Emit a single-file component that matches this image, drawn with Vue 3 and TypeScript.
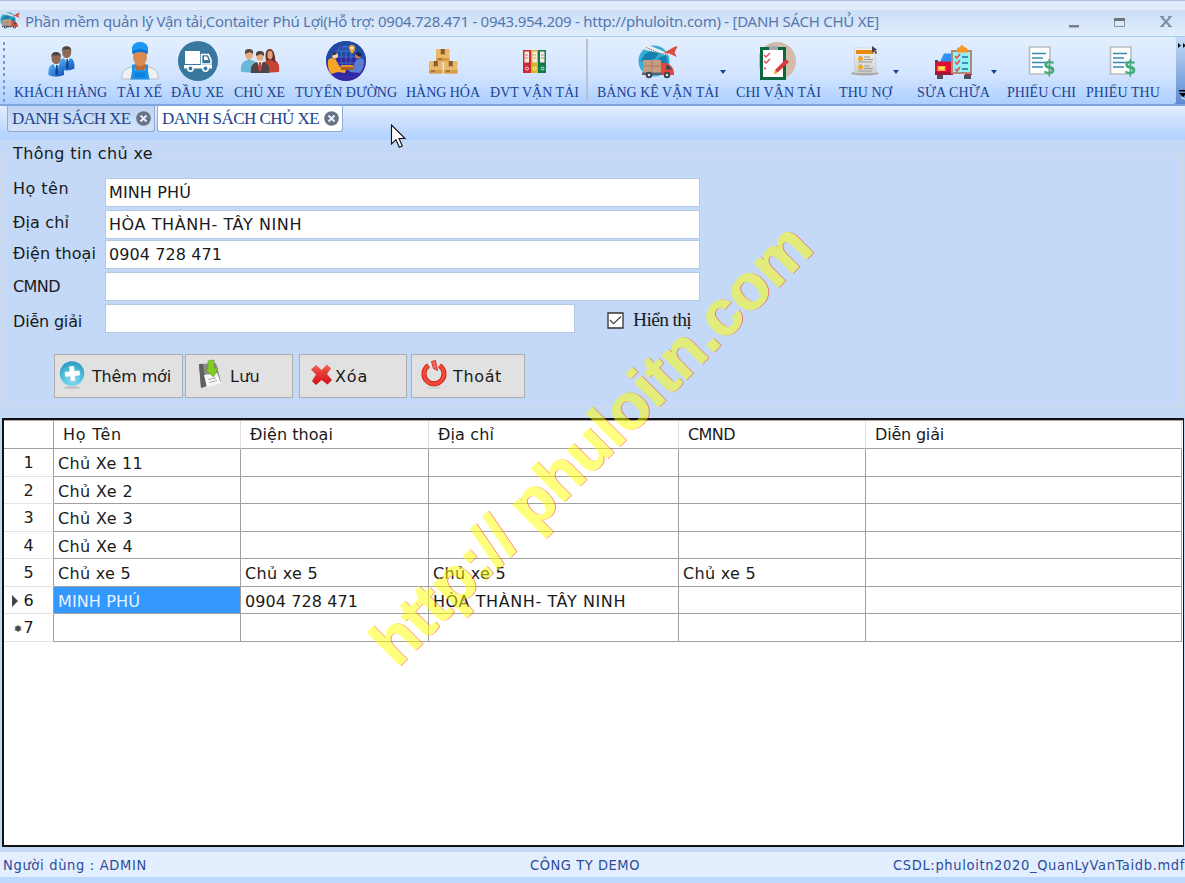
<script setup lang="ts">
import type { Directive } from 'vue'

interface Tool { label: string; icon: string; gap: number; width: number; menu?: boolean; divider?: boolean }
interface Field { label: string; labelWidth: number; value: string; valueWidth: number; cls: string }
interface Cell { text: string; width: number }

/** Spreads the letters of a label so that it fills the given width. */
function spread(el: HTMLElement, target: number) {
  if (!target) return
  el.style.letterSpacing = '0px'
  const natural = el.getBoundingClientRect().width
  const count = Array.from((el.textContent ?? '').trim()).length
  if (count) el.style.letterSpacing = `${(target - natural) / count}px`
}
const vFit: Directive<HTMLElement, number> = {
  mounted: (el, b) => spread(el, b.value),
}

const tools: Tool[] = [
  { label: 'KHÁCH HÀNG', icon: 'people', gap: 14, width: 93 },
  { label: 'TÀI XẾ', icon: 'driver', gap: 10, width: 45 },
  { label: 'ĐẦU XE', icon: 'truck', gap: 9, width: 53 },
  { label: 'CHỦ XE', icon: 'team', gap: 10, width: 51 },
  { label: 'TUYẾN ĐƯỜNG', icon: 'route', gap: 10, width: 102 },
  { label: 'HÀNG HÓA', icon: 'boxes', gap: 9, width: 74 },
  { label: 'ĐVT VẬN TẢI', icon: 'binders', gap: 10, width: 89 },
  { label: 'BẢNG KÊ VẬN TẢI', icon: 'freight', gap: 18, width: 122, menu: true, divider: true },
  { label: 'CHI VẬN TẢI', icon: 'clipboard', gap: 17, width: 85 },
  { label: 'THU NỢ', icon: 'debt', gap: 18, width: 53, menu: true },
  { label: 'SỬA CHỮA', icon: 'repair', gap: 25, width: 73, menu: true },
  { label: 'PHIẾU CHI', icon: 'receipt', gap: 17, width: 69 },
  { label: 'PHIẾU THU', icon: 'receipt', gap: 10, width: 74 },
]

const fields: Field[] = [
  { label: 'Họ tên', labelWidth: 56, value: 'MINH PHÚ', valueWidth: 82, cls: 'f1' },
  { label: 'Địa chỉ', labelWidth: 56, value: 'HÒA THÀNH- TÂY NINH', valueWidth: 193, cls: 'f2' },
  { label: 'Điện thoại', labelWidth: 83, value: '0904 728 471', valueWidth: 113, cls: 'f3' },
  { label: 'CMND', labelWidth: 47, value: '', valueWidth: 0, cls: 'f4' },
  { label: 'Diễn giải', labelWidth: 69, value: '', valueWidth: 0, cls: 'f5' },
]

const columns: Cell[] = [
  { text: 'Họ Tên', width: 59 },
  { text: 'Điện thoại', width: 83 },
  { text: 'Địa chỉ', width: 56 },
  { text: 'CMND', width: 47 },
  { text: 'Diễn giải', width: 69 },
]

const none: Cell = { text: '', width: 0 }
const xe5: Cell = { text: 'Chủ xe 5', width: 73 }
const rows: Cell[][] = [
  [{ text: 'Chủ Xe 11', width: 85 }, none, none, none, none],
  [{ text: 'Chủ Xe 2', width: 75 }, none, none, none, none],
  [{ text: 'Chủ Xe 3', width: 75 }, none, none, none, none],
  [{ text: 'Chủ Xe 4', width: 75 }, none, none, none, none],
  [xe5, xe5, xe5, xe5, none],
  [{ text: 'MINH PHÚ', width: 82 }, { text: '0904 728 471', width: 113 }, { text: 'HÒA THÀNH- TÂY NINH', width: 193 }, none, none],
  [none, none, none, none, none],
]
const current = 5
</script>

<template>
  <div class="window">
    <svg class="sprite" width="0" height="0" aria-hidden="true">
      <defs>
        <linearGradient id="gBlue" x1="0" y1="0" x2="1" y2="1"><stop offset="0" stop-color="#58b8f5" /><stop offset="1" stop-color="#0c4fc0" /></linearGradient>
        <radialGradient id="gCyan" cx=".5" cy=".75" r=".75"><stop offset="0" stop-color="#86e8fb" /><stop offset="1" stop-color="#2798bf" /></radialGradient>
        <linearGradient id="gRed" x1="0" y1="0" x2="0" y2="1"><stop offset="0" stop-color="#f5604c" /><stop offset="1" stop-color="#d00c18" /></linearGradient>
        <linearGradient id="gPaper" x1="0" y1="0" x2="0" y2="1"><stop offset="0" stop-color="#f4f3f0" /><stop offset="1" stop-color="#cfcfce" /></linearGradient>
        <g id="person">
          <path d="M-7.500 15V10.500Q-7 5 -2.500 4H3.500Q7.500 5 8 10.500V15Q0 18.500 -7.500 15z" fill="url(#gBlue)" />
          <path d="M-2.500 4L.5 10 3.500 4z" fill="#dff2ff" /><path d="M0 5h1.500l.8 8-1.500 3-1.500-3z" fill="#174584" />
          <ellipse cx=".2" cy="-1.500" rx="4.600" ry="5.800" fill="#8c6a55" />
          <path d="M-4.800-2.500Q-5-8 0-8t5 5L3-5Q-2-4-3-5z" fill="#4c4340" />
        </g>
        <g id="cube">
          <rect width="13.500" height="12.500" rx="1" fill="#e9b868" /><path d="M0 9h13.500v2.500q0 1-1 1H1q-1 0-1-1z" fill="#d89b4b" />
          <path d="M4.800 0h4v6l-2-1.200-2 1.200z" fill="#8a5930" /><path d="M2 9.500h4v1H2z" fill="#74512d" />
        </g>
      </defs>
      <symbol id="ic-people" viewBox="0 0 40 40">
        <use href="#person" transform="translate(25.500 13) scale(.98)" /><use href="#person" transform="translate(15 19)" />
      </symbol>
      <symbol id="ic-driver" viewBox="0 0 40 40">
        <path d="M2 38q-1-8 5-10.500l7-2.500h12l7 2.500q6 2.500 5 10.500z" fill="#eef0f3" stroke="#aeb3bb" stroke-width=".8" />
        <path d="M15 21h10v7q-5 5-10 0z" fill="#bd6b32" /><ellipse cx="20" cy="15.500" rx="7" ry="10" fill="#d98a50" />
        <path d="M10.500 38.500L12 30V23.500h3V29h10v-5.500h3V30l1.500 8.500z" fill="#1b93ee" /><path d="M15 31.500h10v5H15z" fill="#0f7fdc" />
        <path d="M12 12.500V6.500Q13.500 1 20 1t8 5.500v6q-8-4-16 0z" fill="#1c97f5" /><path d="M12.500 10q7.500-4 15 0v3q-7.500-4-15 0z" fill="#0b72cf" />
      </symbol>
      <symbol id="ic-truck" viewBox="0 0 40 40">
        <circle cx="20" cy="20" r="20" fill="#38789f" />
        <path d="M7 10h15v13H7z" fill="#fff" /><path d="M23.500 13.500h7l2.500 5.500v4h-9.500z" fill="none" stroke="#fff" stroke-width="1.600" /><path d="M26 15.500h3l1.500 3.500H26z" fill="#fff" />
        <path d="M6 24h28v3.500H6z" fill="#fff" />
        <g fill="#38789f" stroke="#fff" stroke-width="1.500"><circle cx="12.500" cy="27.500" r="2.700" /><circle cx="27.500" cy="27.500" r="2.700" /></g>
      </symbol>
      <symbol id="ic-team" viewBox="0 0 40 40">
        <path d="M1 31q-1-9 4-11l4-2 7 3v11z" fill="#68b8d6" /><path d="M39 31q1-9-3-11l-5-2-7 3v11z" fill="#c54434" />
        <path d="M26 20q-2-12 4-12 5 0 5.500 14l-4-3z" fill="#6b312b" /><ellipse cx="9" cy="13.500" rx="4" ry="5" fill="#e4ad7e" /><path d="M5 13q-1-5 4-5t4 5l-3-2z" fill="#594941" />
        <ellipse cx="30" cy="14" rx="2.600" ry="4.200" fill="#e3a279" />
        <path d="M11 32q-1-8 4-10l4-2h2l5 2q4 2 3 10z" fill="#4a4547" /><path d="M17 20h6l-3 9z" fill="#fff" /><path d="M19 21h2l1 7-2 3-2-3z" fill="#ca3f39" />
        <ellipse cx="20" cy="15.500" rx="3.500" ry="4.500" fill="#e5ad7d" /><path d="M16 15q-1-5 4-5t4 5l-3-2z" fill="#4d4140" />
      </symbol>
      <symbol id="ic-route" viewBox="0 0 40 40">
        <circle cx="20" cy="20" r="20" fill="#3027a3" /><path d="M0 20a20 20 0 0 1 40 0q-20-9-40 0z" fill="#204ba5" />
        <g fill="none" stroke="#548bc7" stroke-width=".6"><circle cx="20" cy="16" r="11" /><ellipse cx="20" cy="16" rx="5" ry="11" /><path d="M9 16h22M11 10h18M11 22h18M20 5v22" /><path d="M5 12Q20-3 34 12M7 33Q20 41 34 32" stroke="#4e37c0" /></g>
        <path d="M2 19q4-4 8 0l3 6 7 4-1 3-7-1-7 2q-4-6-3-14z" fill="#f7a526" /><path d="M38 19q-4-4-8 1l-3 6-5 2 2 3 10 1q5-6 4-13z" fill="#5a7fcf" />
        <circle cx="9" cy="14.500" r="3" fill="#ffd0a1" /><path d="M6 14.500q0-5 5-3l-1 2z" fill="#253354" /><circle cx="32" cy="14.500" r="3" fill="#c67b55" /><path d="M29 13q4-5 7 1l-2 2z" fill="#172752" />
        <path d="M15 24h12v5H15z" fill="#a76124" /><path d="M15 24h12v2H15z" fill="#e1912d" /><path d="M26 13q-3-5-3-6a3 3 0 0 1 6 0q0 2-3 6z" fill="#f8a72a" /><circle cx="26" cy="7" r="1.200" fill="#fff" />
      </symbol>
      <symbol id="ic-boxes" viewBox="0 0 40 40">
        <use href="#cube" x="13" y="8" /><use href="#cube" x="6" y="20" /><use href="#cube" x="21" y="20" />
      </symbol>
      <symbol id="ic-binders" viewBox="0 0 40 40">
        <path d="M8 9h8v23H8z" fill="#ce2935" /><path d="M16 9h7v23h-7z" fill="#d6b526" /><path d="M23 9h8v23h-8z" fill="#12794a" />
        <path d="M9.500 10.500h4.500v11H9.500zM17.500 10.500H22v11h-4.500zM25 10.500h4.500v11H25z" fill="#f6e9dd" />
        <path d="M10 14h3M10 17h3" stroke="#c67" stroke-width=".8" /><path d="M18 14h3M18 17h3" stroke="#cba63c" stroke-width=".8" /><path d="M26 14h3M26 17h3" stroke="#4c9c78" stroke-width=".8" />
        <g fill="none" stroke="#fff" stroke-width=".8"><circle cx="12" cy="27.500" r="1.500" /><circle cx="19.700" cy="27.500" r="1.500" /><circle cx="27.500" cy="27.500" r="1.500" /></g>
      </symbol>
      <symbol id="ic-freight" viewBox="0 0 40 40">
        <circle cx="16" cy="20" r="15.500" fill="#35add4" /><path d="M7 13l8-4 6 3-4 6-5 1-3 5-6-5zM20 17l8-3 2 9-6 3z" fill="#1780ae" />
        <path d="M4 4l9 1 14 6 4-1 4-4h4l-3 6 2 3-5-1q-6 1-12-2L7 9z" fill="#e9edf0" /><path d="M29 10l8-4.500h2.500l-3 6 2.500 4.500-8-3.500-5-.5z" fill="#db4c43" /><path d="M8 6.500l14 6 8 1" stroke="#454b52" fill="none" stroke-width=".8" stroke-dasharray="1.500 1" />
        <path d="M5 19h18v14H5z" fill="#c69c80" /><path d="M5 25h18M14 19v14" stroke="#99755f" stroke-width=".8" /><path d="M23 22h6q6 3 7 9v3H23z" fill="#e4483b" /><path d="M28 24.500h3l3 4h-6z" fill="#3c4b5c" />
        <path d="M4 31.500h20v2.500H4z" fill="#596472" /><g fill="#f0e5dc" stroke="#3b4450" stroke-width="2"><circle cx="11" cy="34" r="2.300" /><circle cx="29" cy="34" r="2.300" /></g>
      </symbol>
      <symbol id="ic-clipboard" viewBox="0 0 40 40">
        <circle cx="18" cy="20" r="19" fill="#d2bba9" /><path d="M1 6h26v33H1z" fill="#09683c" /><path d="M4 9h20v27H4z" fill="#fff" /><path d="M10 5h9v4h-9z" fill="#a2a8ad" />
        <path d="M5 14l2 2 4-4M5 20l2 2 4-4M5 27l2 1" stroke="#e5465b" stroke-width="1.400" fill="none" />
        <path d="M15 33l1-4 11-11 3 3-12 11z" fill="#d83a3e" /><path d="M15 33l1-4 3 3z" fill="#f4c24d" />
      </symbol>
      <symbol id="ic-debt" viewBox="0 0 40 40">
        <path d="M5 33q1-2.500 5-2.500h18q4 0 5 2.500-14 3-28 0z" fill="#a9a6a2" /><path d="M8.500 7H25l4 4 1.500 21h-22z" fill="url(#gPaper)" stroke="#c3c4c4" stroke-width=".5" /><path d="M10 9h18v4H10z" fill="#e98b13" />
        <path d="M13 15h3v5h-3zM13 23.500h3v5h-3z" fill="#f2a223" /><path d="M12 16.500h5v2.500h-5zM12 25h5v2.500h-5z" fill="#f7ab2d" /><path d="M18 16h6M18 18.500h9M12 21h14M18 25h6M18 27.500h9M12 30h14" stroke="#929a9b" stroke-width="1" />
        <path d="M26 5v6.500l2-1.500 2 3 1.200-1-2-3h2.300z" fill="#424448" />
      </symbol>
      <symbol id="ic-repair" viewBox="0 0 40 40">
        <path d="M6 21l4-8.500h9v9z" fill="#2d91f1" /><path d="M1 20.500h18V34H1z" fill="#d90f35" /><path d="M1 31h18v3H1z" fill="#a81134" /><path d="M3.500 25h8v5h-8z" fill="#ffae38" /><path d="M5 26h5v2.500H5z" fill="#ffe15e" /><path d="M1 19h3v2H1z" fill="#45454c" />
        <path d="M3 34h6v4H3zM30 34h7v4h-7z" fill="#505058" /><path d="M31 22h7v12h-7z" fill="#d90f35" />
        <path d="M17 9h21v24H17z" fill="#b08a74" /><path d="M19 11h17v20H19z" fill="#93f0f5" /><path d="M23 7l3-1q2-4 4 0l3 1v4.500H23z" fill="#f69726" />
        <path d="M21 15l2 2 3-4M21 21l2 2 3-4M21 28l2 2 3-4" stroke="#e2554a" stroke-width="1.700" fill="none" /><path d="M28 16h6M28 22h6M28 28h6" stroke="#1a72a8" stroke-width="1.700" />
      </symbol>
      <symbol id="ic-receipt" viewBox="0 0 40 40">
        <path d="M7.500 6h20.500v27H7.500z" fill="#fdfdfc" stroke="#b9bdbe" stroke-width="1.600" /><path d="M10 12.500h14M10 17h11M10 21.500h16M10 26h11" stroke="#388ab6" stroke-width="1.400" />
      </symbol>
    </svg>

    <header class="titlebar">
      <svg class="app-icon" viewBox="0 0 40 40"><use href="#ic-freight" /></svg>
      <span v-fit="854" class="title">Phần mềm quản lý Vận tải,Contaiter Phú Lợi(Hỗ trợ: 0904.728.471 - 0943.954.209 - http://phuloitn.com) - [DANH SÁCH CHỦ XE]</span>
      <svg class="controls" viewBox="0 0 120 20">
        <path d="M4 15h10v2.500H4z" fill="#777f8b" /><path d="M49.500 9.500h10v7h-10z" fill="#dfe8f5" stroke="#8193ae" /><path d="M49 8h11v3H49z" fill="#6b7380" />
        <path d="M96.500 7l9 9.500M105.500 7l-9 9.500" stroke="#7f90ab" stroke-width="2.200" /><path d="M95 6.500h4M103 6.500h4M95 16.500h4M103 16.500h4" stroke="#7f90ab" />
      </svg>
    </header>

    <nav class="toolbar">
      <div class="strip">
        <i class="grip"></i>
        <button v-for="t in tools" :key="t.label" class="tool" :class="{ divided: t.divider }" :style="{ width: t.width + 'px', marginLeft: t.gap + 'px' }">
          <svg class="tool-icon" width="40" height="40"><use :href="'#ic-' + t.icon" /></svg>
          <b v-if="t.icon === 'receipt'" class="dollar">$</b>
          <span v-fit="t.width" class="tool-label">{{ t.label }}</span>
          <i v-if="t.menu" class="caret"></i>
        </button>
      </div>
      <svg class="overflow" width="9" height="68" viewBox="0 0 9 68">
        <path d="M2 6l3 2.500L2 11zM7 6l3 2.500L7 11z" fill="#111" /><path d="M3 53h6v1.500H3zM3 56h8l-4 4z" fill="#000" /><path d="M5 60l3 2h1" stroke="#fff" fill="none" />
      </svg>
    </nav>

    <div class="tabs">
      <div class="tab"><span v-fit="118.500">DANH SÁCH XE</span><svg class="close" viewBox="0 0 15 15"><circle cx="7.500" cy="7.500" r="7.300" fill="#667387" /><path d="M4.500 4.500l6 6M10.500 4.500l-6 6" stroke="#e9eff8" stroke-width="2" /></svg></div>
      <div class="tab active"><span v-fit="157">DANH SÁCH CHỦ XE</span><svg class="close" viewBox="0 0 15 15"><circle cx="7.500" cy="7.500" r="7.300" fill="#667387" /><path d="M4.500 4.500l6 6M10.500 4.500l-6 6" stroke="#e9eff8" stroke-width="2" /></svg></div>
    </div>

    <section class="form">
      <fieldset class="group">
        <legend><span v-fit="140">Thông tin chủ xe</span></legend>
        <div class="fields">
          <div v-for="f in fields" :key="f.label" class="field" :class="f.cls">
            <label><span v-fit="f.labelWidth">{{ f.label }}</span></label>
            <div class="input"><span v-if="f.value" v-fit="f.valueWidth">{{ f.value }}</span></div>
            <div v-if="f.cls === 'f5'" class="check">
              <svg width="17" height="17" viewBox="0 0 17 17"><path d="M1 1h15v15H1z" fill="#fff" stroke="#333" stroke-width="1.300" /><path d="M3 8l3.500 3.700L14 4.500" stroke="#444" stroke-width="1.200" fill="none" /></svg>
              <span v-fit="58">Hiển thị</span>
            </div>
          </div>
        </div>
        <div class="actions">
          <button class="btn b1">
            <svg width="28" height="32" viewBox="0 0 28 32"><ellipse cx="14" cy="28.500" rx="8" ry="1.500" fill="#c2c2c2" /><circle cx="14" cy="14.500" r="12.200" fill="url(#gCyan)" /><path d="M11.500 7h5.500v5h5v5.500h-5v5h-5.500v-5h-5V12h5z" fill="#fff" stroke="#4aaac9" stroke-width=".5" transform="rotate(-6 14 14)" /></svg>
            <span v-fit="79">Thêm mới</span>
          </button>
          <button class="btn b2">
            <svg width="28" height="32" viewBox="0 0 28 32"><path d="M3 5l17-1 5 19-20 6z" fill="#8b8b8b" /><path d="M3 5h4l3 22-5 2z" fill="#5f5f5f" /><path d="M8 16l13-2 4 10-14 4z" fill="#f8f8f8" /><path d="M12 20.500l8-1.500M13 23.500l8-2" stroke="#aaa" /><path d="M12 2l6-1v8h4l-4.500 9L9 10.500l3-.5z" fill="#83ce26" stroke="#4d9a17" stroke-width=".6" /></svg>
            <span v-fit="30">Lưu</span>
          </button>
          <button class="btn b3">
            <svg width="24" height="24" viewBox="0 0 24 24"><path d="M6 2l5.500 5L17 1.500l4 4L17 11l5 6-4.500 4.500L11.500 17 6 22l-4-4 4-6.500-5-5z" fill="url(#gRed)" /></svg>
            <span v-fit="33">Xóa</span>
          </button>
          <button class="btn b4">
            <svg width="28" height="32" viewBox="0 0 28 32"><ellipse cx="14" cy="28.500" rx="7" ry="1.500" fill="#cfcfcf" /><path d="M8.500 6.500a10 10 0 1 0 11 0" fill="none" stroke="#cb1a12" stroke-width="5" /><path d="M8.500 6.500a10 10 0 1 0 11 0" fill="none" stroke="#f64a38" stroke-width="3.200" /><path d="M11.500 2.500l4-1 2 10-4-2z" fill="#f36b5c" stroke="#c91810" stroke-width=".8" /></svg>
            <span v-fit="49">Thoát</span>
          </button>
        </div>
      </fieldset>
    </section>

    <main class="grid">
      <div class="row head">
        <div class="cell num"></div>
        <div v-for="c in columns" :key="c.text" class="cell"><span v-fit="c.width">{{ c.text }}</span></div>
      </div>
      <div v-for="(r, i) in rows" :key="i" class="row" :class="{ odd: i % 2 === 1 }">
        <div class="cell num">
          <svg v-if="i >= current" class="marker" :class="{ fresh: i > current }" width="8" height="12" viewBox="0 0 8 12"><path v-if="i === current" d="M1 0l6 6-6 6z" fill="#444" /><g v-else><circle cx="4" cy="6.500" r="2.800" fill="#555" /><path d="M4 3v7M.7 4.700l6.600 3.600M7.300 4.700L.7 8.300" stroke="#444" stroke-width=".8" /></g></svg>
          <span>{{ i + 1 }}</span>
        </div>
        <div v-for="(c, j) in r" :key="j" class="cell" :class="{ selected: i === current && j === 0 }"><span v-if="c.text" v-fit="c.width">{{ c.text }}</span></div>
      </div>
    </main>

    <footer class="status">
      <span v-fit="144">Người dùng : ADMIN</span>
      <span v-fit="110">CÔNG TY DEMO</span>
      <span v-fit="292">CSDL:phuloitn2020_QuanLyVanTaidb.mdf</span>
    </footer>

    <svg class="watermark" width="1185" height="883">
      <defs>
        <mask id="edge" maskUnits="userSpaceOnUse" x="0" y="0" width="1185" height="883">
          <rect width="1185" height="883" fill="#fff" />
          <text transform="translate(397 668.500) rotate(-45)" textLength="592" fill="#000" stroke="#000">http:// phuloitn.com</text>
        </mask>
      </defs>
      <g mask="url(#edge)"><text transform="translate(398 668.500) rotate(-45)" textLength="592" fill="#ff3b30" stroke="#ff3b30" opacity=".65">http:// phuloitn.com</text></g>
      <text transform="translate(397 668.500) rotate(-45)" textLength="592" fill="#ffff00" stroke="#ffff00" opacity=".5">http:// phuloitn.com</text>
    </svg>
    <svg class="pointer" width="16" height="26" viewBox="0 0 16 26"><path d="M1.500 1v19l4.500-4.300 3.300 7.500 3-1.200-3.300-7.500h6z" fill="#fff" stroke="#111" stroke-width="1.100" /></svg>
  </div>
</template>

<style>
body { margin: 0; overflow: hidden; }
</style>

<style scoped>
.window { position: relative; display: flex; flex-direction: column; width: 1185px; height: 883px; overflow: hidden; background: #c3d9f7; font: 16px/20px "DejaVu Sans", sans-serif; color: #1a1a1a; }
.window span { white-space: pre; display: inline-block; flex: none; }
.sprite { position: absolute; }
button { border: 0; padding: 0; background: none; font: inherit; color: inherit; }

.titlebar { box-sizing: border-box; height: 36px; display: flex; align-items: center; padding: 5px 0 0; border-top: 1px solid #aebfdd; background: linear-gradient(#e3ebfa 0 9px, #cadef7 9px, #e3eefc 36px); color: #5577ad; flex: none; }
.app-icon { width: 20px; height: 20px; margin: -3px 5px 0 0; }
.title { font: 15px/20px "Noto Sans", sans-serif; }
.controls { width: 120px; height: 20px; margin: -3px 0 0 auto; }

.toolbar { display: flex; height: 70px; box-sizing: border-box; border-top: 1px solid #a8cdf3; border-bottom: 2px solid #7ea5dc; background: linear-gradient(#c5dbf8, #5a8ad0); flex: none; }
.strip { position: relative; display: flex; width: 1176px; background: linear-gradient(#e3efff, #d3e5ff 55%, #adcfff); border-radius: 0 3px 3px 0; }
.grip { position: absolute; left: 3px; top: 5px; width: 2px; height: 62px; background: repeating-linear-gradient(#6f9ade 0 3px, transparent 3px 6.300px); }
.tool { position: relative; height: 67px; display: flex; flex-direction: column; align-items: center; padding-top: 4px; box-sizing: border-box; flex: none; }
.tool-icon { flex: none; }
.tool-label { font: 14px/20px "Liberation Serif", serif; color: #1b4290; margin-top: 2px; }
.dollar { position: absolute; left: calc(50% + 1px); top: 19px; font: 700 20px/22px "DejaVu Sans", sans-serif; color: #45a97b; transform: scaleX(.9); transform-origin: left; }
.divided::before { content: ""; position: absolute; left: -11px; top: 2px; width: 2px; height: 63px; background: #b8c2d0; }
.caret { position: absolute; left: calc(100% + 1px); top: 33px; border: 3.500px solid transparent; border-top: 4px solid #16428f; border-bottom: 0; }
.overflow { flex: none; }

.tabs { height: 34px; display: flex; gap: 2px; padding-left: 7px; background: linear-gradient(#e2eefe, #afd0ff); flex: none; }
.tab { box-sizing: border-box; height: 26px; width: 148px; border: 1px solid #92abd2; border-top: 0; border-radius: 0 0 3px 3px; display: flex; align-items: center; padding-left: 4px; background: linear-gradient(#bed4f2, #d4e3f8); font: 17px/24px "Liberation Serif", serif; color: #1b4290; }
.tab.active { width: 186px; background: #fff; }
.close { width: 15px; height: 15px; margin-left: 5px; flex: none; }

.form { height: 278px; flex: none; padding: 4px 2px 0; box-sizing: border-box; }
.group { position: relative; margin: 0; height: 263px; box-sizing: border-box; border: 1px solid #d3dbe7; padding: 0; min-width: 0; }
legend { padding: 0 3px; margin-left: 7px; height: 20px; line-height: 20px; }
.fields { display: grid; grid-template-rows: 32px 30px 32px 32px 29px; padding-top: 14px; margin-left: 10px; }
.field { display: flex; align-items: flex-start; }
.field label { width: 92px; padding-top: 1px; line-height: 20px; flex: none; }
.input { box-sizing: border-box; width: 595px; height: 29px; border: 1px solid #b3c9e6; background: #fff; padding: 4px 0 0 3px; }
.f5 .input { width: 470px; }
.f4 label { padding-top: 5px; }
.f5 label { padding-top: 8px; }
.f2 label { padding-top: 3px; }
.f3 label { padding-top: 4px; }
.check { display: flex; align-items: center; gap: 9px; margin: 3px 0 0 32px; font: 19.500px/26px "Liberation Serif", serif; }
.actions { display: flex; margin: 21px 0 0 51px; }
.btn { box-sizing: border-box; height: 44px; border: 1px solid #adadad; background: #e1e1e1; display: flex; align-items: center; }
.btn svg { flex: none; margin-top: -2px; }
.btn span { margin-top: 1px; }
.b1 { width: 129px; padding-left: 3px; gap: 6px; }
.b2 { width: 108px; margin-left: 2px; padding-left: 10px; gap: 6px; }
.b3 { width: 108px; margin-left: 6px; padding-left: 10px; gap: 1px; }
.b4 { width: 114px; margin-left: 4px; padding-left: 8px; gap: 5px; }

.grid { box-sizing: border-box; width: 1182px; height: 429px; margin-left: 2px; border: 1px solid #111; border-width: 2px 1px 2px 2px; background: #fff; flex: none; }
.row { display: grid; grid-template-columns: 50px 187px 188px 250px 187px 316px; height: 28px; }
.row.odd { height: 27px; }
.cell { border-right: 1px solid #a0a0a0; border-bottom: 1px solid #a0a0a0; padding-left: 4px; display: flex; align-items: center; box-sizing: border-box; padding-top: 2px; }
.odd .cell { padding-top: 3px; }
.row .num { position: relative; justify-content: center; padding: 1px 0 0; border-bottom-color: #e3e3e3; }
.marker { position: absolute; left: 7px; top: 8px; }
.fresh { left: 10px; }
.head { height: 29px; border-top: 1px solid #aaa; box-sizing: border-box; }
.head .cell { border-right-color: #dedede; padding-left: 9px; padding-top: 1px; border-bottom-color: #a0a0a0; }
.head .num { border-right-color: #a0a0a0; }
.selected { background: #3399ff; color: #e8f2ff; }

.status { display: grid; grid-template-columns: 527px 363px 295px; margin-top: 5px; padding-left: 3px; height: 25px; align-items: center; background: #e3eefe; border-bottom: 6px solid #bed8fd; font: 14.500px/20px "DejaVu Sans Condensed", "DejaVu Sans", sans-serif; color: #2c4c9b; flex: none; }
.status span { justify-self: start; }

.watermark { position: absolute; left: 0; top: 0; pointer-events: none; font: 700 64px "Liberation Sans", sans-serif; stroke-width: 1px; }
.pointer { position: absolute; left: 390px; top: 124px; }
</style>
